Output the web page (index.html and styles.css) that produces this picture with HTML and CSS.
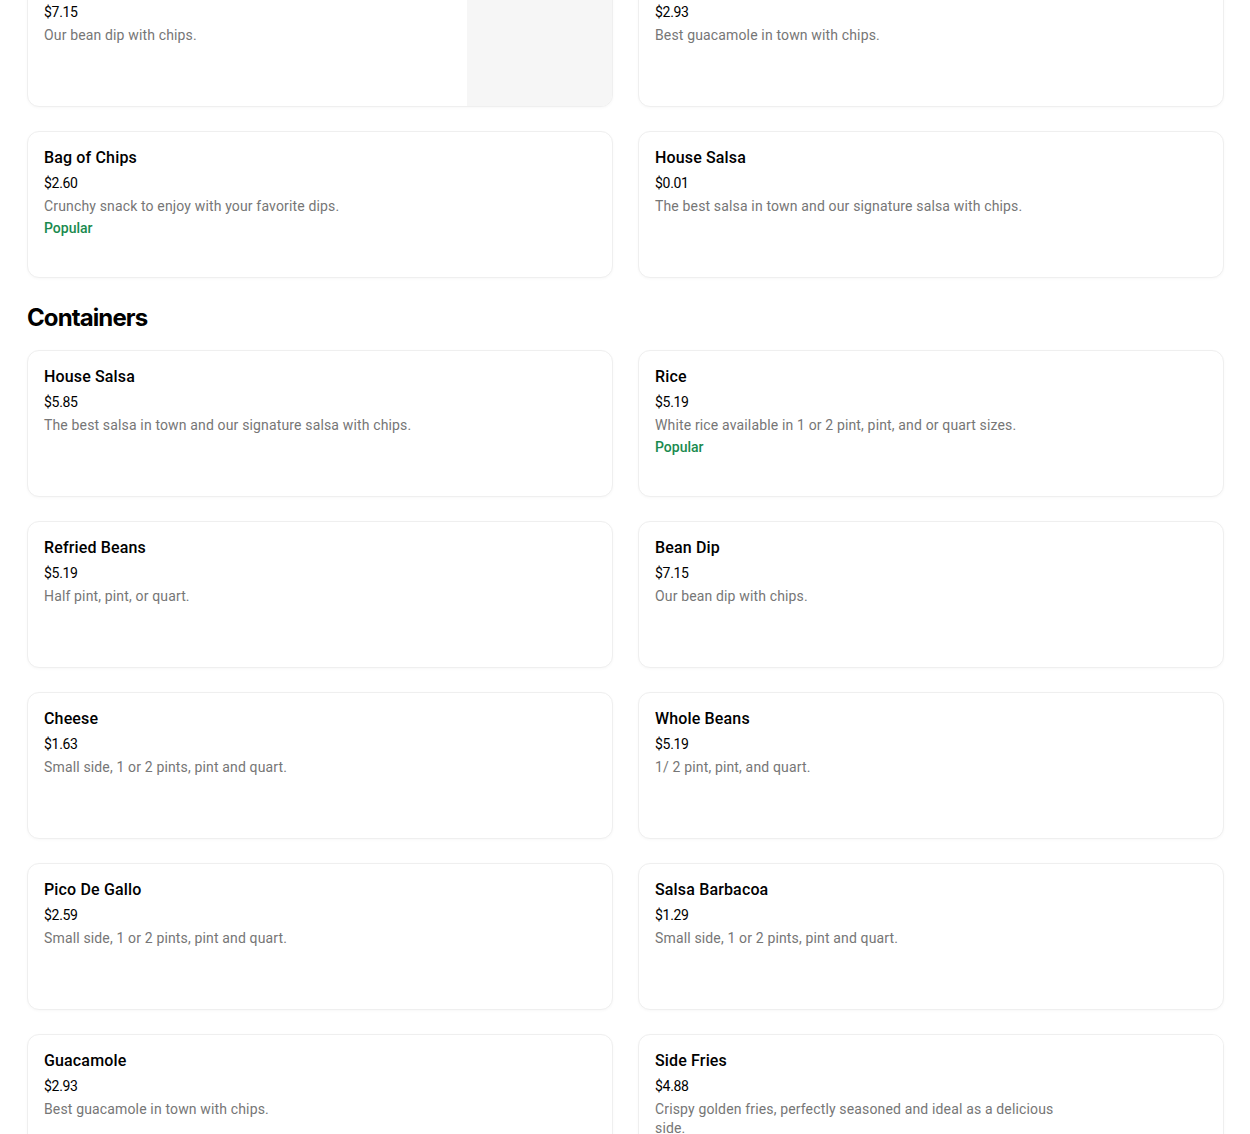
FILE: index.html
```html
<!DOCTYPE html>
<html>
<head>
<meta charset="utf-8">
<link rel="stylesheet" href="styles.css">
</head>
<body>
<main class="menu">
  <section class="section section-first">
    <div class="grid">
      <div class="card has-image">
        <div class="info">
          <div class="title">Bean Dip</div>
          <div class="price">$7.15</div>
          <div class="desc">Our bean dip with chips.</div>
        </div>
        <div class="thumb"></div>
      </div>
      <div class="card">
        <div class="info">
          <div class="title">Guacamole</div>
          <div class="price">$2.93</div>
          <div class="desc">Best guacamole in town with chips.</div>
        </div>
      </div>
      <div class="card">
        <div class="info">
          <div class="title">Bag of Chips</div>
          <div class="price">$2.60</div>
          <div class="desc">Crunchy snack to enjoy with your favorite dips.</div>
          <div class="popular">Popular</div>
        </div>
      </div>
      <div class="card">
        <div class="info">
          <div class="title">House Salsa</div>
          <div class="price">$0.01</div>
          <div class="desc">The best salsa in town and our signature salsa with chips.</div>
        </div>
      </div>
    </div>
  </section>
  <section class="section">
    <h2 class="heading">Containers</h2>
    <div class="grid">
      <div class="card">
        <div class="info">
          <div class="title">House Salsa</div>
          <div class="price">$5.85</div>
          <div class="desc">The best salsa in town and our signature salsa with chips.</div>
        </div>
      </div>
      <div class="card">
        <div class="info">
          <div class="title">Rice</div>
          <div class="price">$5.19</div>
          <div class="desc">White rice available in 1 or 2 pint, pint, and or quart sizes.</div>
          <div class="popular">Popular</div>
        </div>
      </div>
      <div class="card">
        <div class="info">
          <div class="title">Refried Beans</div>
          <div class="price">$5.19</div>
          <div class="desc">Half pint, pint, or quart.</div>
        </div>
      </div>
      <div class="card">
        <div class="info">
          <div class="title">Bean Dip</div>
          <div class="price">$7.15</div>
          <div class="desc">Our bean dip with chips.</div>
        </div>
      </div>
      <div class="card">
        <div class="info">
          <div class="title">Cheese</div>
          <div class="price">$1.63</div>
          <div class="desc">Small side, 1 or 2 pints, pint and quart.</div>
        </div>
      </div>
      <div class="card">
        <div class="info">
          <div class="title">Whole Beans</div>
          <div class="price">$5.19</div>
          <div class="desc">1/ 2 pint, pint, and quart.</div>
        </div>
      </div>
      <div class="card">
        <div class="info">
          <div class="title">Pico De Gallo</div>
          <div class="price">$2.59</div>
          <div class="desc">Small side, 1 or 2 pints, pint and quart.</div>
        </div>
      </div>
      <div class="card">
        <div class="info">
          <div class="title">Salsa Barbacoa</div>
          <div class="price">$1.29</div>
          <div class="desc">Small side, 1 or 2 pints, pint and quart.</div>
        </div>
      </div>
      <div class="card">
        <div class="info">
          <div class="title">Guacamole</div>
          <div class="price">$2.93</div>
          <div class="desc">Best guacamole in town with chips.</div>
        </div>
      </div>
      <div class="card has-image">
        <div class="info">
          <div class="title">Side Fries</div>
          <div class="price">$4.88</div>
          <div class="desc">Crispy golden fries, perfectly seasoned and ideal as a delicious side.</div>
        </div>
        <div class="thumb blank"></div>
      </div>
    </div>
  </section>
</main>
</body>
</html>
```
FILE: styles.css
```css
* { box-sizing: border-box; }
html, body {
  margin: 0;
  padding: 0;
  background: #ffffff;
  overflow: hidden;
}
body {
  font-family: Roboto, "Liberation Sans", sans-serif;
  color: #000;
}
.menu {
  padding: 0 26px 0 27px;
  margin-top: -40px;
}
.section-first {
  margin-bottom: 24px;
}
.heading {
  margin: 0 0 16px 0;
  font-family: Inter, Roboto, sans-serif;
  font-size: 24px;
  line-height: 32px;
  font-weight: 700;
  letter-spacing: -0.9px;
  color: #000;
}
.grid {
  display: grid;
  grid-template-columns: 1fr 1fr;
  column-gap: 25px;
  row-gap: 24px;
}
.card {
  height: 147px;
  border: 1px solid #efefef;
  border-radius: 12px;
  box-shadow: 0 1px 3px rgba(0,0,0,0.03);
  display: flex;
  overflow: hidden;
  background: #fff;
}
.info {
  flex: 1;
  padding: 16px 16px 16px 16px;
  min-width: 0;
}
.thumb {
  width: 145px;
  flex: 0 0 145px;
  background: #f6f6f6;
}
.thumb.blank {
  background: #fff;
}
.title {
  font-size: 16px;
  line-height: 20px;
  font-weight: 500;
  letter-spacing: 0.15px;
  color: #000;
  margin-bottom: 5px;
}
.price {
  font-size: 14px;
  line-height: 20px;
  color: #000;
  letter-spacing: -0.3px;
  margin-bottom: 4px;
}
.desc {
  font-size: 14px;
  line-height: 19px;
  letter-spacing: 0.15px;
  color: #767676;
}
.popular {
  font-size: 14px;
  line-height: 20px;
  font-weight: 500;
  color: #1a8a4e;
  margin-top: 2px;
}
```
